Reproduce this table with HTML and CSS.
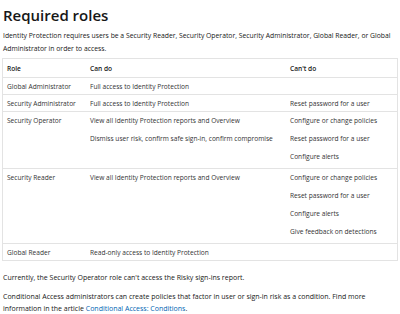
FILE: index.html
```html
<!DOCTYPE html>
<html lang="en">
<head>
    <meta charset="UTF-8">
    <title>Required roles</title>
    <link rel="stylesheet" href="styles.css">
</head>
<body>
    <div class="content">
        <h2 class="title">Required roles</h2>
        <p class="intro">Identity Protection requires users be a Security Reader, Security Operator, Security Administrator, Global Reader, or Global Administrator in order to access.</p>

        <table class="roles">
            <thead>
                <tr>
                    <th class="col-role">Role</th>
                    <th class="col-can">Can do</th>
                    <th>Can't do</th>
                </tr>
            </thead>
            <tbody>
                <tr>
                    <td>Global Administrator</td>
                    <td>Full access to Identity Protection</td>
                    <td></td>
                </tr>
                <tr>
                    <td>Security Administrator</td>
                    <td>Full access to Identity Protection</td>
                    <td>Reset password for a user</td>
                </tr>
                <tr>
                    <td>Security Operator</td>
                    <td>
                        <div class="item">View all Identity Protection reports and Overview</div>
                        <div class="item">Dismiss user risk, confirm safe sign-in, confirm compromise</div>
                    </td>
                    <td>
                        <div class="item">Configure or change policies</div>
                        <div class="item">Reset password for a user</div>
                        <div class="item">Configure alerts</div>
                    </td>
                </tr>
                <tr>
                    <td>Security Reader</td>
                    <td>
                        <div class="item">View all Identity Protection reports and Overview</div>
                    </td>
                    <td>
                        <div class="item">Configure or change policies</div>
                        <div class="item">Reset password for a user</div>
                        <div class="item">Configure alerts</div>
                        <div class="item">Give feedback on detections</div>
                    </td>
                </tr>
                <tr>
                    <td>Global Reader</td>
                    <td>Read-only access to Identity Protection</td>
                    <td></td>
                </tr>
            </tbody>
        </table>

        <p class="note">Currently, the Security Operator role can't access the Risky sign-ins report.</p>
        <p class="note">Conditional Access administrators can create policies that factor in user or sign-in risk as a condition. Find more information in the article <a href="#">Conditional Access: Conditions</a>.</p>
    </div>
</body>
</html>
```

FILE: styles.css
```css
body {
    margin: 0;
    font-family: 'Open Sans', sans-serif;
    background: #fff;
    color: #171717;
}
.content {
    padding: 0 3px;
}
.title {
    font-size: 15px;
    font-weight: 600;
    margin: 0;
    padding-top: 3px;
    line-height: 24px;
}
.intro {
    font-size: 6.8px;
    line-height: 12.5px;
    margin: 3px 0 3px;
}
.roles {
    width: 396px;
    margin: 0 0 11px -1px;
    border-collapse: collapse;
    border: 1px solid #e3e3e3;
    font-size: 6.6px;
    color: #333;
}
.roles th {
    text-align: left;
    font-weight: 600;
    color: #171717;
    padding: 5px 4px 4px;
    line-height: 9px;
}
.roles td {
    vertical-align: top;
    padding: 4px 4px 3px;
    line-height: 9px;
    border-top: 1px solid #e3e3e3;
}
.roles .col-role {
    width: 75px;
}
.roles .col-can {
    width: 192px;
}
.item {
    line-height: 10px;
    margin-bottom: 8px;
}
.item:last-child {
    margin-bottom: 3px;
}
.note {
    font-size: 7px;
    line-height: 12px;
    margin: 0 0 7px;
}
.note a {
    color: #0065b3;
    text-decoration: none;
}
```
